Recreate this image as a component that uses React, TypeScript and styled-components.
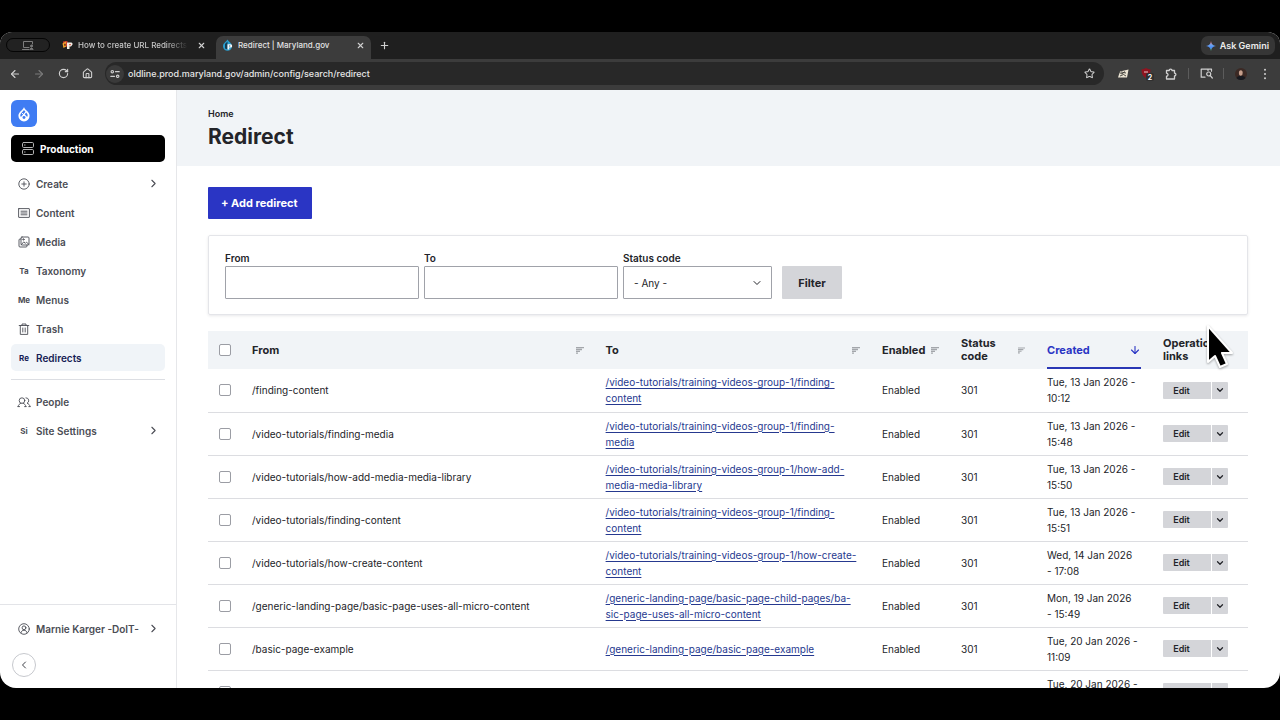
import React from "react";
import styled, { createGlobalStyle } from "styled-components";
import {
  ArrowDown,
  ArrowLeft,
  ArrowRight,
  ChevronDown,
  ChevronLeft,
  ChevronRight,
  House,
  Plus,
  RotateCw,
  Star,
  X,
} from "lucide-react";

const ink = "#232429";
const blue = "#2a35c4";

const Global = createGlobalStyle`
  *, *::before, *::after { box-sizing: border-box; }
  body { margin: 0; background: #000; font-family: Inter, "Liberation Sans", sans-serif; color: ${ink}; }
  button, input, select { font-family: inherit; margin: 0; }
  h1, ul, ol { margin: 0; padding: 0; }
  ul, ol { list-style: none; }
`;

const Screen = styled.div`
  height: 100vh;
  padding: 32px 0;
  background: #000;
  overflow: hidden;
`;

const Window = styled.div`
  position: relative;
  display: flex;
  flex-direction: column;
  height: 100%;
  overflow: hidden;
  border-radius: 12px 12px 16px 16px;
  background: #fff;
`;

/* Browser chrome */

const TabStrip = styled.div`
  display: flex;
  align-items: flex-end;
  height: 27px;
  flex: none;
  padding: 0 5px 0 6px;
  background: #1f1f1f;
  color: #e3e3e3;
`;

const ChromeButton = styled.button`
  display: flex;
  align-items: center;
  justify-content: center;
  width: 24px;
  height: 22px;
  flex: none;
  padding: 0;
  border: 0;
  background: none;
  color: #d0d0d0;
`;

const NewTab = styled(ChromeButton)`
  margin: 0 0 3px 1px;
`;

const ScreenPill = styled.button`
  display: flex;
  align-items: center;
  justify-content: center;
  width: 44px;
  height: 14px;
  margin: 0 6px 7px 0;
  padding: 0;
  border: 1px solid #050505;
  border-radius: 7px;
  background: #222;
  color: #7d7d7d;
`;

const Tab = styled.div<{ $active?: boolean }>`
  display: flex;
  align-items: center;
  gap: 5px;
  width: ${(p) => (p.$active ? 155 : 160)}px;
  height: 23px;
  padding: 0 ${(p) => (p.$active ? 3 : 7)}px 5px 6px;
  border-radius: 7px 7px 0 0;
  background: ${(p) => (p.$active ? "#3c3c3c" : "transparent")};
`;

const TabTitle = styled.span<{ $fade?: boolean }>`
  flex: 1;
  overflow: hidden;
  white-space: nowrap;
  font-size: 8px;
  line-height: 14px;
  font-weight: 500;
  ${(p) =>
    p.$fade
      ? "mask-image: linear-gradient(90deg, #000 80%, transparent); color: #c7c7c7;"
      : ""}
`;

const TabClose = styled(ChromeButton)`
  width: 16px;
  height: 16px;
`;

const Spacer = styled.div`
  flex: 1;
`;

const Gemini = styled.button`
  display: flex;
  align-items: center;
  gap: 4px;
  height: 19px;
  margin-bottom: 4px;
  padding: 0 6px 0 5px;
  border: 0;
  border-radius: 7px;
  background: #363636;
  color: #ececec;
  font-size: 9px;
  font-weight: 600;
  white-space: nowrap;
`;

const Toolbar = styled.div`
  display: flex;
  align-items: center;
  height: 31px;
  flex: none;
  padding: 0 3px 2px;
  background: #3c3c3c;
  color: #d8d8d8;
`;

const AddressBar = styled.div`
  display: flex;
  align-items: center;
  flex: 1;
  height: 23px;
  margin: 0 7px 0 6px;
  padding: 0 3px 0 1px;
  border-radius: 12px;
  background: #282828;
`;

const SiteInfo = styled(ChromeButton)`
  width: 18px;
  height: 18px;
  border-radius: 50%;
  background: #3a3a3a;
`;

const Address = styled.input`
  flex: 1;
  min-width: 0;
  height: 20px;
  padding: 0 4px;
  border: 0;
  background: none;
  color: #e6e6e6;
  font-size: 9px;
  font-weight: 500;
`;

const Rule = styled.span`
  width: 1px;
  height: 11px;
  margin: 0 5px;
  background: #5c5c5c;
`;

/* Page */

const Page = styled.div`
  display: flex;
  flex: 1;
  min-height: 0;
`;

const Sidebar = styled.aside`
  display: flex;
  flex-direction: column;
  width: 177px;
  flex: none;
  border-right: 1px solid #e6e7ea;
  font-size: 10px;
`;

const SidebarTop = styled.div`
  display: flex;
  flex-direction: column;
  flex: 1;
  align-items: stretch;
  padding: 10px 11px 0;
`;

const Logo = styled.a`
  display: flex;
  align-items: center;
  justify-content: center;
  width: 26px;
  height: 27px;
  border-radius: 6px;
  background: #3f7cf3;
`;

const Environment = styled.a`
  display: flex;
  align-items: center;
  gap: 6px;
  height: 27px;
  margin: 8px 0;
  padding-left: 11px;
  border-radius: 5px;
  background: #000;
  color: #fff;
  font-size: 10px;
  font-weight: 700;
  text-decoration: none;
`;

const Menu = styled.ul<{ $second?: boolean }>`
  display: flex;
  flex-direction: column;
  gap: 2px;
  ${(p) => (p.$second ? "margin-top: 8px; padding-top: 8px; border-top: 1px solid #dcdee3;" : "")}
`;

const MenuLink = styled.a<{ $active?: boolean }>`
  display: flex;
  align-items: center;
  gap: 5px;
  height: 27px;
  padding: 0 5px 0 6px;
  border-radius: 5px;
  background: ${(p) => (p.$active ? "#f0f4f8" : "transparent")};
  color: ${(p) => (p.$active ? "#161d55" : "#4b4d55")};
  font-size: 10px;
  font-weight: 600;
  text-decoration: none;
  white-space: nowrap;
`;

const IconSlot = styled.span`
  display: flex;
  align-items: center;
  justify-content: center;
  width: 14px;
  flex: none;
  font-size: 8px;
  font-weight: 700;
`;

const MenuLabel = styled.span`
  flex: 1;
`;

const SidebarFoot = styled.div`
  padding: 10px 11px 11px;
  border-top: 1px solid #e3e4e8;
`;

const Collapse = styled.button`
  display: flex;
  align-items: center;
  justify-content: center;
  width: 24px;
  height: 24px;
  margin: 11px 0 0 1px;
  padding: 0;
  border: 1px solid #c6c8cd;
  border-radius: 50%;
  background: #fff;
  color: #3e4047;
`;

const Main = styled.main`
  display: flex;
  flex-direction: column;
  flex: 1;
  min-width: 0;
  overflow: hidden;
`;

const PageHeader = styled.header`
  flex: none;
  height: 76px;
  padding: 16px 31px 0;
  background: #f1f4f7;
`;

const Crumb = styled.a`
  display: block;
  color: ${ink};
  font-size: 9px;
  line-height: 16px;
  font-weight: 600;
  text-decoration: none;
`;

const Title = styled.h1`
  font-size: 21px;
  line-height: 30px;
  font-weight: 700;
`;

const Content = styled.div`
  display: flex;
  flex-direction: column;
  align-items: flex-start;
  gap: 16px;
  padding: 21px 32px 0 31px;
`;

const AddButton = styled.a`
  display: flex;
  align-items: center;
  height: 32px;
  padding: 0 15px 0 13px;
  border-radius: 1px;
  background: ${blue};
  color: #fff;
  font-size: 11px;
  font-weight: 700;
  text-decoration: none;
`;

const FilterForm = styled.form`
  display: flex;
  align-items: flex-end;
  gap: 5px;
  width: 100%;
  height: 80px;
  padding: 0 16px 15px;
  border: 1px solid #e4e5e9;
  border-radius: 2px;
  box-shadow: 0 1px 3px rgba(30, 34, 50, 0.1);
`;

const Field = styled.div<{ $narrow?: boolean }>`
  position: relative;
  display: flex;
  flex-direction: column;
  width: ${(p) => (p.$narrow ? 149 : 194)}px;
`;

const Label = styled.label`
  font-size: 10px;
  line-height: 16px;
  font-weight: 600;
`;

const TextBox = styled.input`
  width: 100%;
  height: 33px;
  padding: 0 10px;
  border: 1px solid #a0a2a9;
  border-radius: 1px;
  background: #fff;
  font-size: 10px;
`;

const Select = styled.select`
  width: 100%;
  height: 33px;
  padding: 0 10px;
  border: 1px solid #a0a2a9;
  border-radius: 1px;
  appearance: none;
  background: #fff;
  color: ${ink};
  font-size: 10px;
`;

const SelectArrow = styled(ChevronDown)`
  position: absolute;
  right: 9px;
  bottom: 10px;
  pointer-events: none;
`;

const FilterButton = styled.button`
  width: 60px;
  height: 33px;
  margin-left: 5px;
  padding: 0;
  border: 0;
  border-radius: 1px;
  background: #d4d5d9;
  color: ${ink};
  font-size: 11px;
  font-weight: 700;
`;

const Table = styled.table`
  width: 100%;
  table-layout: fixed;
  border-collapse: collapse;
  font-size: 10px;
  line-height: 16px;
`;

const Th = styled.th`
  height: 38px;
  padding: 0 11px;
  background: #f1f4f7;
  font-size: 11px;
  line-height: 13px;
  font-weight: 700;
  text-align: left;
`;

const HeadCell = styled.div<{ $sorted?: boolean }>`
  display: flex;
  align-items: center;
  justify-content: space-between;
  height: 38px;
  color: ${(p) => (p.$sorted ? blue : "inherit")};
  box-shadow: inset 0 -2px 0 ${(p) => (p.$sorted ? "#2a37b5" : "transparent")};
`;

const SortLink = styled.a`
  color: inherit;
  text-decoration: none;
`;

const Td = styled.td`
  height: 43px;
  padding: 0 11px;
  border-bottom: 1px solid #dcdde1;
  white-space: nowrap;
`;

const Tick = styled.input`
  display: block;
  width: 12px;
  height: 12px;
  appearance: none;
  border: 1px solid #9b9da4;
  border-radius: 2px;
  background: #fff;
`;

const TargetLink = styled.a`
  color: #26398f;
  text-underline-offset: 2px;
`;

const DropButton = styled.div`
  display: flex;
  gap: 1px;
  width: 65px;
`;

const DropPart = styled.button<{ $toggle?: boolean }>`
  display: flex;
  align-items: center;
  justify-content: center;
  flex: ${(p) => (p.$toggle ? "0 0 16px" : "1")};
  height: 17px;
  padding: 0 ${(p) => (p.$toggle ? 0 : 11)}px 0 0;
  border: 0;
  border-radius: ${(p) => (p.$toggle ? "0 1px 1px 0" : "1px 0 0 1px")};
  background: #d4d5d9;
  color: ${ink};
  font-size: 9px;
  font-weight: 600;
`;

const Pointer = styled.svg`
  position: absolute;
  right: 46px;
  top: 290px;
  filter: drop-shadow(0 1px 1px rgba(0, 0, 0, 0.35));
`;

/* Icons that the sets do not carry */

const line = { fill: "none", stroke: "currentColor", strokeLinecap: "round", strokeLinejoin: "round" } as const;

const SortIcon = () => (
  <svg width="8" height="7" viewBox="0 0 8 7" stroke="#a3a6ab" strokeWidth="1.300">
    <path d="M0 .7h8M0 2.500h6M0 4.300h4M0 6.100h2" />
  </svg>
);

const DrupalDrop = () => (
  <svg width="16" height="16" viewBox="0 0 24 24">
    <path d="M12 1.500c-.8 2.600-2.300 3.900-4.200 5.800C5.700 9.400 3.600 11.600 3.600 14.700a8.400 8.400 0 0 0 16.800 0c0-3.100-2.100-5.300-4.200-7.400C14.300 5.400 12.800 4.100 12 1.500z" fill="#fff" />
    <path d="M12 6 14.200 8.600 11 12 7.400 16.500C5.800 14.500 6.300 12.300 8 10.400z" fill="#3f7cf3" />
    <path d="M15.300 9.800c2.300 2.300 2.900 4.500 1.400 6.700L13 12.300z" fill="#3f7cf3" />
    <circle cx="12" cy="17.300" r="2.200" fill="#3f7cf3" />
    <path d="M9 10.500 12 13.500" stroke="#fff" strokeWidth="1.500" />
  </svg>
);

const ServerIcon = () => (
  <svg width="12" height="13" viewBox="0 0 12 13" {...line} stroke="#b5b5b5">
    <rect x=".5" y=".5" width="11" height="5" rx="1.200" />
    <rect x=".5" y="7.500" width="11" height="5" rx="1.200" />
    <path d="M2.500 3h.6M2.500 10h.6" />
  </svg>
);

const CreateIcon = () => (
  <svg width="12" height="12" viewBox="0 0 12 12" {...line} strokeWidth=".9">
    <circle cx="6" cy="6" r="5.200" />
    <path d="M6 3.800v4.400M3.800 6h4.400" />
  </svg>
);

const ContentIcon = () => (
  <svg width="12" height="12" viewBox="0 0 12 12" {...line} strokeWidth=".9">
    <rect x=".6" y="1.600" width="10.800" height="8.800" rx=".3" />
    <path d="M3 4.200h6M3 6h6M3 7.800h6" />
  </svg>
);

const MediaIcon = () => (
  <svg width="12" height="12" viewBox="0 0 12 12" {...line} strokeWidth=".9">
    <rect x="3" y="1" width="8" height="8" rx="1" />
    <path d="M3 3H2a1 1 0 0 0-1 1v6a1 1 0 0 0 1 1h6a1 1 0 0 0 1-1V9M3.200 8.800l2.600-3 1.500 1.600L8.500 6.200 11 8.500" />
    <circle cx="5.400" cy="3.400" r=".7" />
  </svg>
);

const TrashIcon = () => (
  <svg width="12" height="12" viewBox="0 0 12 12" {...line} strokeWidth=".9">
    <path d="M1.200 2.500h9.600M4 2.500V1h4v1.500M2.300 2.500v8.900h7.400V2.500M4.800 5v4M7.200 5v4" />
  </svg>
);

const PeopleIcon = () => (
  <svg width="14" height="12" viewBox="0 0 14 12" {...line} strokeWidth=".9">
    <circle cx="5" cy="4.600" r="2.800" />
    <path d="M1 10.600c.5-2 1.700-2.900 2.900-3.300M9 10.600C8.500 8.700 7.400 7.700 6.200 7.300M9 1.800a2.800 2.800 0 0 1 1 5.400c1.500.4 2.700 1.600 3.100 3.400M1 10.600h1.600M7.600 10.600H9M11.800 10.600h1.300" />
  </svg>
);

const UserIcon = () => (
  <svg width="12" height="12" viewBox="0 0 12 12" {...line} strokeWidth=".9">
    <circle cx="6" cy="6" r="5.300" />
    <circle cx="6" cy="4.800" r="1.900" />
    <path d="M2.900 9.800c.4-1.800 1.500-2.500 3.100-2.500s2.700.7 3.100 2.500" />
  </svg>
);

const ScreenIcon = () => (
  <svg width="12" height="9" viewBox="0 0 12 9" {...line}>
    <path d="M7 6.500H1.500v-6h9V3M.5 8.500H7" />
    <circle cx="9.500" cy="5" r="1" fill="currentColor" />
    <path d="M8 8.500c0-2 3-2 3 0z" fill="currentColor" />
  </svg>
);

const TrainingIcon = () => (
  <svg width="11" height="10" viewBox="0 0 11 10">
    <path d="M1 1.500 5.500 1 5 6.500 1.500 7z" fill="#d9402b" />
    <path d="M.5 3.500 4 1.500v5L1.500 8z" fill="#f3a52d" />
    <path d="M2.200 3.800h1.500v2H2.200z" fill="#5a2415" />
    <path d="M5 2.500h4.200a1.500 1.500 0 0 1 1 2.500L9 6.500H7.500V9H5z" fill="#f4efe6" />
    <path d="M7.300 4h1.400v1.300H7.300z" fill="#c63324" />
  </svg>
);

const MarylandIcon = () => (
  <svg width="11" height="12" viewBox="0 0 11 12">
    <path d="M5.500.5C4.500 2.500 1 4 1 7.200a4.500 4.500 0 0 0 9 0C10 4 6.500 2.500 5.500.5z" fill="#2a9fd0" />
    <path d="M5.500 2.500 3 5v4.500l2.500 1z" fill="#153d52" />
    <path d="M5.500 5.200h3a1.700 1.700 0 0 1 0 3.400H7.200v2H5.500z" fill="#f2f7fa" />
    <path d="M7.200 6.400h1v1h-1z" fill="#17394b" />
  </svg>
);

const GeminiIcon = () => (
  <svg width="10" height="10" viewBox="0 0 12 12">
    <defs>
      <linearGradient id="spark" x1="0" y1="0" x2="0" y2="1">
        <stop offset=".05" stopColor="#ee6f66" />
        <stop offset=".4" stopColor="#6aa3f2" />
        <stop offset=".65" stopColor="#4c8df6" />
        <stop offset="1" stopColor="#4ec27a" />
      </linearGradient>
    </defs>
    <path d="M6 0c.5 3.700 2.300 5.500 6 6-3.700.5-5.500 2.300-6 6-.5-3.700-2.300-5.500-6-6 3.700-.5 5.500-2.300 6-6z" fill="url(#spark)" />
  </svg>
);

const TuneIcon = () => (
  <svg width="10" height="10" viewBox="0 0 10 10" {...line} strokeWidth="1.200">
    <circle cx="2.300" cy="2.700" r="1.200" />
    <path d="M5.500 2.700h3.700M.8 7.300h3.700" />
    <circle cx="7.700" cy="7.300" r="1.200" />
  </svg>
);

const NotesIcon = () => (
  <svg width="12" height="10" viewBox="0 0 12 10">
    <path d="M3 2.500 11.500.5 10 8.500H1z" fill="#ebe4d3" />
    <path d="M2.500 3.500 5 5l3-2.500M3 7l3.500-1.500L9 7M4 3l5 1" stroke="#3b3a36" fill="none" strokeWidth=".9" />
  </svg>
);

const ShieldIcon = () => (
  <svg width="14" height="14" viewBox="0 0 14 14">
    <path d="M6 1c1.500 1 3 1.300 4.500 1.300C10.500 7 9 9.500 6 11 3 9.500 1.500 7 1.500 2.300 3 2.300 4.500 2 6 1z" fill="#8f1420" />
    <path d="M4 5h4" stroke="#e7c5c8" />
    <rect x="6" y="6" width="8" height="8" rx="2" fill="#303030" />
    <text x="10" y="13" fill="#fff" fontSize="7" fontWeight="700" textAnchor="middle">2</text>
  </svg>
);

const PuzzleIcon = () => (
  <svg width="12" height="12" viewBox="0 0 12 12" {...line} strokeWidth="1.300">
    <path d="M1.500 2.500h2.700a1.400 1.400 0 0 1 2.800 0h2.500v2.700a1.400 1.400 0 0 1 0 2.800v3h-8V8.200a1.500 1.500 0 0 0 0-3z" />
  </svg>
);

const SearchTabIcon = () => (
  <svg width="13" height="11" viewBox="0 0 13 11" {...line} strokeWidth="1.200">
    <path d="M5 9.200H1.200V1.200h10.300v2M8 1.200v1.500" />
    <circle cx="8.700" cy="6" r="2" />
    <path d="m10.300 7.600 2 2.400" />
  </svg>
);

const Avatar = () => (
  <svg width="12" height="12" viewBox="0 0 12 12">
    <circle cx="6" cy="6" r="6" fill="#3b2924" />
    <path d="M1.500 10a6 6 0 0 0 9 0C9.500 8 7.500 8 6 8s-3.500 0-4.500 2z" fill="#17191f" />
    <ellipse cx="5.800" cy="5" rx="1.900" ry="2.800" fill="#c69f8c" />
  </svg>
);

const DotsIcon = () => (
  <svg width="4" height="12" viewBox="0 0 4 12" fill="currentColor">
    <circle cx="2" cy="1.800" r="1" />
    <circle cx="2" cy="6" r="1" />
    <circle cx="2" cy="10.200" r="1" />
  </svg>
);

/* Data */

type Item = { label: string; icon: React.ReactNode; active?: boolean; more?: boolean };

const primary: Item[] = [
  { label: "Create", icon: <CreateIcon />, more: true },
  { label: "Content", icon: <ContentIcon /> },
  { label: "Media", icon: <MediaIcon /> },
  { label: "Taxonomy", icon: "Ta" },
  { label: "Menus", icon: "Me" },
  { label: "Trash", icon: <TrashIcon /> },
  { label: "Redirects", icon: "Re", active: true },
];

const secondary: Item[] = [
  { label: "People", icon: <PeopleIcon /> },
  { label: "Site Settings", icon: "Si", more: true },
];

type Row = { from: string; to: string[]; created: string[] };

const rows: Row[] = [
  { from: "/finding-content", to: ["/video-tutorials/training-videos-group-1/finding-", "content"], created: ["Tue, 13 Jan 2026 -", "10:12"] },
  { from: "/video-tutorials/finding-media", to: ["/video-tutorials/training-videos-group-1/finding-", "media"], created: ["Tue, 13 Jan 2026 -", "15:48"] },
  { from: "/video-tutorials/how-add-media-media-library", to: ["/video-tutorials/training-videos-group-1/how-add-", "media-media-library"], created: ["Tue, 13 Jan 2026 -", "15:50"] },
  { from: "/video-tutorials/finding-content", to: ["/video-tutorials/training-videos-group-1/finding-", "content"], created: ["Tue, 13 Jan 2026 -", "15:51"] },
  { from: "/video-tutorials/how-create-content", to: ["/video-tutorials/training-videos-group-1/how-create-", "content"], created: ["Wed, 14 Jan 2026", "- 17:08"] },
  { from: "/generic-landing-page/basic-page-uses-all-micro-content", to: ["/generic-landing-page/basic-page-child-pages/ba-", "sic-page-uses-all-micro-content"], created: ["Mon, 19 Jan 2026", "- 15:49"] },
  { from: "/basic-page-example", to: ["/generic-landing-page/basic-page-example"], created: ["Tue, 20 Jan 2026 -", "11:09"] },
  { from: "", to: [], created: ["Tue, 20 Jan 2026 -", "\u00a0"] },
];

const Lines = ({ parts }: { parts: string[] }) => (
  <>
    {parts.map((part, i) => (
      <React.Fragment key={i}>
        {i > 0 && <br />}
        {part}
      </React.Fragment>
    ))}
  </>
);

const MenuItem = ({ label, icon, active, more }: Item) => (
  <MenuLink href="#" $active={active} aria-current={active ? "page" : undefined}>
    <IconSlot>{icon}</IconSlot>
    <MenuLabel>{label}</MenuLabel>
    {more && <ChevronRight size={13} strokeWidth={2} />}
  </MenuLink>
);

const SortHead = ({ label }: { label: string }) => (
  <Th scope="col">
    <HeadCell>
      <SortLink href="#">{label}</SortLink>
      <SortIcon />
    </HeadCell>
  </Th>
);

export default function App() {
  return (
    <>
      <Global />
      <Screen>
        <Window>
          <TabStrip>
            <ScreenPill aria-label="Shared screen"><ScreenIcon /></ScreenPill>
            <Tab>
              <TrainingIcon />
              <TabTitle $fade>How to create URL Redirects</TabTitle>
              <TabClose aria-label="Close tab"><X size={9} strokeWidth={3} /></TabClose>
            </Tab>
            <Tab $active>
              <MarylandIcon />
              <TabTitle>Redirect | Maryland.gov</TabTitle>
              <TabClose aria-label="Close tab"><X size={9} strokeWidth={3} /></TabClose>
            </Tab>
            <NewTab aria-label="New tab"><Plus size={11} strokeWidth={2.5} /></NewTab>
            <Spacer />
            <Gemini><GeminiIcon />Ask Gemini</Gemini>
          </TabStrip>
          <Toolbar>
            <ChromeButton aria-label="Back"><ArrowLeft size={12} strokeWidth={2.2} /></ChromeButton>
            <ChromeButton aria-label="Forward" disabled><ArrowRight size={12} strokeWidth={2.2} color="#7a7a7a" /></ChromeButton>
            <ChromeButton aria-label="Reload"><RotateCw size={11} strokeWidth={2.5} /></ChromeButton>
            <ChromeButton aria-label="Home page"><House size={11} strokeWidth={2.4} /></ChromeButton>
            <AddressBar>
              <SiteInfo aria-label="Site information"><TuneIcon /></SiteInfo>
              <Address aria-label="Address" defaultValue="oldline.prod.maryland.gov/admin/config/search/redirect" />
              <ChromeButton aria-label="Bookmark"><Star size={11} strokeWidth={2.2} /></ChromeButton>
            </AddressBar>
            <ChromeButton aria-label="Notes"><NotesIcon /></ChromeButton>
            <ChromeButton aria-label="Blocker"><ShieldIcon /></ChromeButton>
            <ChromeButton aria-label="Extensions"><PuzzleIcon /></ChromeButton>
            <Rule />
            <ChromeButton aria-label="Tab search"><SearchTabIcon /></ChromeButton>
            <Rule />
            <ChromeButton aria-label="Profile"><Avatar /></ChromeButton>
            <ChromeButton aria-label="Browser menu"><DotsIcon /></ChromeButton>
          </Toolbar>
          <Page>
            <Sidebar>
              <SidebarTop>
                <Logo href="#" aria-label="Drupal"><DrupalDrop /></Logo>
                <Environment href="#"><ServerIcon />Production</Environment>
                <nav aria-label="Administration">
                  <Menu>{primary.map((item) => <li key={item.label}><MenuItem {...item} /></li>)}</Menu>
                  <Menu $second>{secondary.map((item) => <li key={item.label}><MenuItem {...item} /></li>)}</Menu>
                </nav>
              </SidebarTop>
              <SidebarFoot>
                <MenuItem label="Marnie Karger -DoIT-" icon={<UserIcon />} more />
                <Collapse aria-label="Collapse sidebar"><ChevronLeft size={12} strokeWidth={2} /></Collapse>
              </SidebarFoot>
            </Sidebar>
            <Main>
              <PageHeader>
                <Crumb href="#">Home</Crumb>
                <Title>Redirect</Title>
              </PageHeader>
              <Content>
                <AddButton href="#">+ Add redirect</AddButton>
                <FilterForm onSubmit={(e) => e.preventDefault()}>
                  <Field>
                    <Label htmlFor="from">From</Label>
                    <TextBox id="from" type="text" />
                  </Field>
                  <Field>
                    <Label htmlFor="to">To</Label>
                    <TextBox id="to" type="text" />
                  </Field>
                  <Field $narrow>
                    <Label htmlFor="status">Status code</Label>
                    <Select id="status"><option>- Any -</option></Select>
                    <SelectArrow size={12} strokeWidth={2} />
                  </Field>
                  <FilterButton type="submit">Filter</FilterButton>
                </FilterForm>
                <Table>
                  <colgroup>
                    <col style={{ width: 33 }} />
                    <col style={{ width: "34%" }} />
                    <col />
                    <col style={{ width: 79 }} />
                    <col style={{ width: 86 }} />
                    <col style={{ width: 116 }} />
                    <col style={{ width: 96 }} />
                  </colgroup>
                  <thead>
                    <tr>
                      <Th scope="col"><Tick type="checkbox" aria-label="Select all rows" /></Th>
                      <SortHead label="From" />
                      <SortHead label="To" />
                      <SortHead label="Enabled" />
                      <SortHead label="Status code" />
                      <Th scope="col" aria-sort="ascending">
                        <HeadCell $sorted>
                          <SortLink href="#">Created</SortLink>
                          <ArrowDown size={12} strokeWidth={2.2} />
                        </HeadCell>
                      </Th>
                      <Th scope="col">Operations links</Th>
                    </tr>
                  </thead>
                  <tbody>
                    {rows.map((row, i) => (
                      <tr key={i}>
                        <Td><Tick type="checkbox" aria-label={`Select row ${i + 1}`} /></Td>
                        <Td>{row.from}</Td>
                        <Td>{row.to.length > 0 && <TargetLink href="#"><Lines parts={row.to} /></TargetLink>}</Td>
                        <Td>{row.from && "Enabled"}</Td>
                        <Td>{row.from && "301"}</Td>
                        <Td><Lines parts={row.created} /></Td>
                        <Td>
                          <DropButton>
                            <DropPart>Edit</DropPart>
                            <DropPart $toggle aria-label="More operations"><ChevronDown size={10} strokeWidth={3} /></DropPart>
                          </DropButton>
                        </Td>
                      </tr>
                    ))}
                  </tbody>
                </Table>
              </Content>
            </Main>
          </Page>
          <Pointer width="28" height="50" viewBox="0 0 28 50" aria-hidden="true">
            <path d="M2 4v36l7-6 5 11 7-3-5-11h10z" fill="#000" stroke="#fff" strokeWidth="2" strokeLinejoin="round" />
          </Pointer>
        </Window>
      </Screen>
    </>
  );
}
